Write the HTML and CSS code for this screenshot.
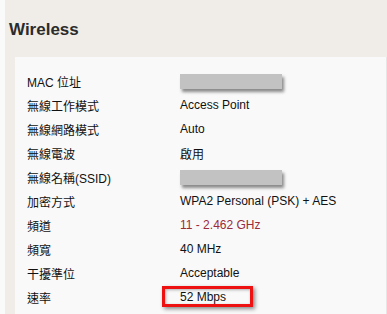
FILE: index.html
```html
<!DOCTYPE html>
<html>
<head>
<meta charset="utf-8">
<link rel="stylesheet" href="styles.css">
</head>
<body>
<div class="page">
  <h1 class="title">Wireless</h1>
  <div class="panel">
    <div class="row"><div class="label">MAC 位址</div><div class="value"><span class="mask"></span></div></div>
    <div class="row"><div class="label">無線工作模式</div><div class="value">Access Point</div></div>
    <div class="row"><div class="label">無線網路模式</div><div class="value">Auto</div></div>
    <div class="row"><div class="label">無線電波</div><div class="value">啟用</div></div>
    <div class="row"><div class="label">無線名稱(SSID)</div><div class="value"><span class="mask"></span></div></div>
    <div class="row"><div class="label">加密方式</div><div class="value">WPA2 Personal (PSK) + AES</div></div>
    <div class="row"><div class="label">頻道</div><div class="value channel">11 - 2.462 GHz</div></div>
    <div class="row"><div class="label">頻寬</div><div class="value">40 MHz</div></div>
    <div class="row"><div class="label">干擾準位</div><div class="value">Acceptable</div></div>
    <div class="row"><div class="label">速率</div><div class="value highlight">52 Mbps<span class="redbox"></span></div></div>
  </div>
</div>
</body>
</html>
```
FILE: styles.css
```css
html, body {
  margin: 0;
  padding: 0;
  background: #fafafa;
}
.page {
  margin-left: 5px;
  height: 314px;
  overflow: hidden;
  background: #f0ede8;
  font-family: "Liberation Sans", "Noto Sans CJK TC", sans-serif;
}
.title {
  margin: 20px 0 17px 4px;
  height: 20px;
  line-height: 20px;
  font-size: 17px;
  font-weight: bold;
  color: #2b2b2b;
}
.panel {
  margin-left: 10px;
  background: #f9f9f9;
  padding: 12px 0 0 12px;
  height: 300px;
  border-right: 1px solid #e6e6e6;
}
.row {
  display: flex;
  height: 24px;
  align-items: center;
  font-size: 12px;
  color: #111;
}
.label {
  width: 153px;
  flex: none;
}
.value {
  position: relative;
  display: flex;
  align-items: center;
}
.channel {
  color: #9a2b3a;
}
.mask {
  display: block;
  width: 102px;
  height: 15px;
  background: #c2c2c2;
  box-shadow: 2px 3px 3px rgba(0, 0, 0, 0.45);
}
.redbox {
  position: absolute;
  left: -18px;
  top: -4px;
  width: 85px;
  height: 15px;
  border: 3px solid #ee1111;
  box-shadow: 2px 2px 4px rgba(0, 0, 0, 0.45), inset 1px 1px 3px rgba(0, 0, 0, 0.3);
}
```
